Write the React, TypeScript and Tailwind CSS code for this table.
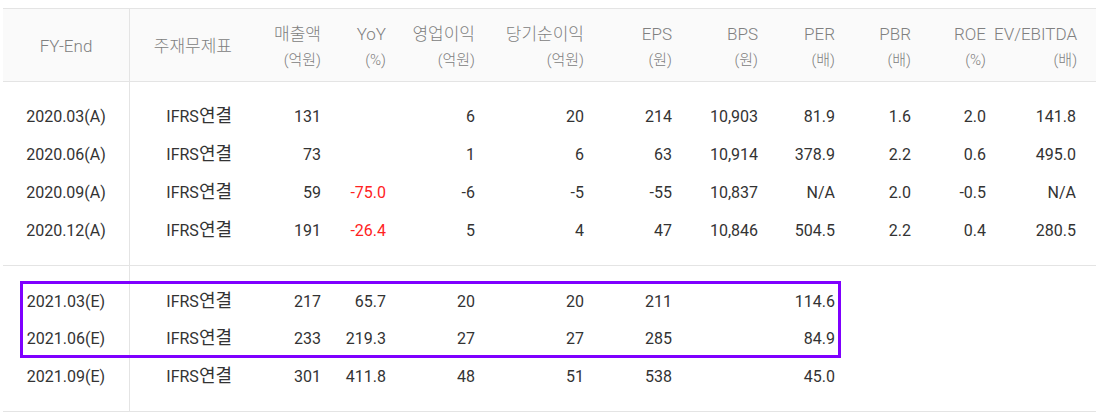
import React from "react";

const COLS = "grid-cols-[127px_110px_89px_65px_89px_109px_88px_86px_77px_76px_75px_1fr]";

type Row = { d: string; v: (string | null)[] };

const actual: Row[] = [
  { d: "2020.03(A)", v: ["IFRS", "131", null, "6", "20", "214", "10,903", "81.9", "1.6", "2.0", "141.8"] },
  { d: "2020.06(A)", v: ["IFRS", "73", null, "1", "6", "63", "10,914", "378.9", "2.2", "0.6", "495.0"] },
  { d: "2020.09(A)", v: ["IFRS", "59", "-75.0", "-6", "-5", "-55", "10,837", "N/A", "2.0", "-0.5", "N/A"] },
  { d: "2020.12(A)", v: ["IFRS", "191", "-26.4", "5", "4", "47", "10,846", "504.5", "2.2", "0.4", "280.5"] },
];

const est: Row[] = [
  { d: "2021.03(E)", v: ["IFRS", "217", "65.7", "20", "20", "211", null, "114.6", null, null, null] },
  { d: "2021.06(E)", v: ["IFRS", "233", "219.3", "27", "27", "285", null, "84.9", null, null, null] },
  { d: "2021.09(E)", v: ["IFRS", "301", "411.8", "48", "51", "538", null, "45.0", null, null, null] },
];

const heads: [string, string][] = [
  ["매출액", "(억원)"],
  ["YoY", "(%)"],
  ["영업이익", "(억원)"],
  ["당기순이익", "(억원)"],
  ["EPS", "(원)"],
  ["BPS", "(원)"],
  ["PER", "(배)"],
  ["PBR", "(배)"],
  ["ROE", "(%)"],
  ["EV/EBITDA", "(배)"],
];

function Spacer({ h }: { h: string }) {
  return (
    <div className={`grid ${COLS} ${h}`}>
      <div className="border-r border-[#e4e4e4]" />
    </div>
  );
}

function DataRow({ r, h }: { r: Row; h: string }) {
  return (
    <div className={`grid ${COLS} ${h} items-center text-[16px] text-[#333333]`}>
      <div className="h-full flex items-center justify-center border-r border-[#e4e4e4]">{r.d}</div>
      {r.v.map((x, i) => {
        const red = x !== null && i === 2 && x.startsWith("-");
        return (
          <div
            key={i}
            className={`text-right whitespace-nowrap ${i === r.v.length - 1 ? "pr-[20px]" : "pr-[8px]"} ${red ? "text-[#ff2222]" : ""}`}
          >
            {i === 0 ? (
              <>
                IFRS<span className="text-[18px] leading-[16px]">연결</span>
              </>
            ) : (
              x ?? ""
            )}
          </div>
        );
      })}
    </div>
  );
}

export default function App() {
  return (
    <div
      className="relative w-[1096px] h-[420px] bg-white overflow-hidden"
      style={{ fontFamily: "Roboto, 'Noto Sans CJK KR', sans-serif" }}
    >
      <div className="pt-[8px] pl-[3px]">
        {/* header */}
        <div className={`grid ${COLS} h-[74px] border-y border-[#e4e4e4] bg-[#fafafa] text-[#808080] font-light`}>
          <div className="flex items-center justify-center pt-[4px] border-r border-[#e4e4e4] text-[17px]">FY-End</div>
          <div className="flex items-center justify-end pt-[4px] pr-[8px] text-[17px]">주재무제표</div>
          {heads.map(([a, b], i) => (
            <div
              key={i}
              className={`flex flex-col items-end pt-[14px] ${i === heads.length - 1 ? "pr-[20px]" : "pr-[8px]"}`}
            >
              <div className="h-[22px] leading-[22px] text-[17px] whitespace-nowrap">{a}</div>
              <div className="h-[22px] mt-[4px] leading-[22px] text-[15px] whitespace-nowrap">{b}</div>
            </div>
          ))}
        </div>

        {/* actual section */}
        <div className="border-b border-[#e4e4e4]">
          <Spacer h="h-[16px]" />
          {actual.map((r) => (
            <DataRow key={r.d} r={r} h="h-[38px]" />
          ))}
          <Spacer h="h-[15px]" />
        </div>

        {/* estimate section */}
        <div className="border-b border-[#e4e4e4]">
          <Spacer h="h-[17px]" />
          {est.map((r) => (
            <DataRow key={r.d} r={r} h="h-[37.5px]" />
          ))}
          <Spacer h="h-[15.5px]" />
        </div>
      </div>

      {/* highlight box */}
      <div className="absolute left-[20px] top-[281px] w-[821px] h-[77px] border-[3px] border-[#7f00ff] pointer-events-none" />
    </div>
  );
}
